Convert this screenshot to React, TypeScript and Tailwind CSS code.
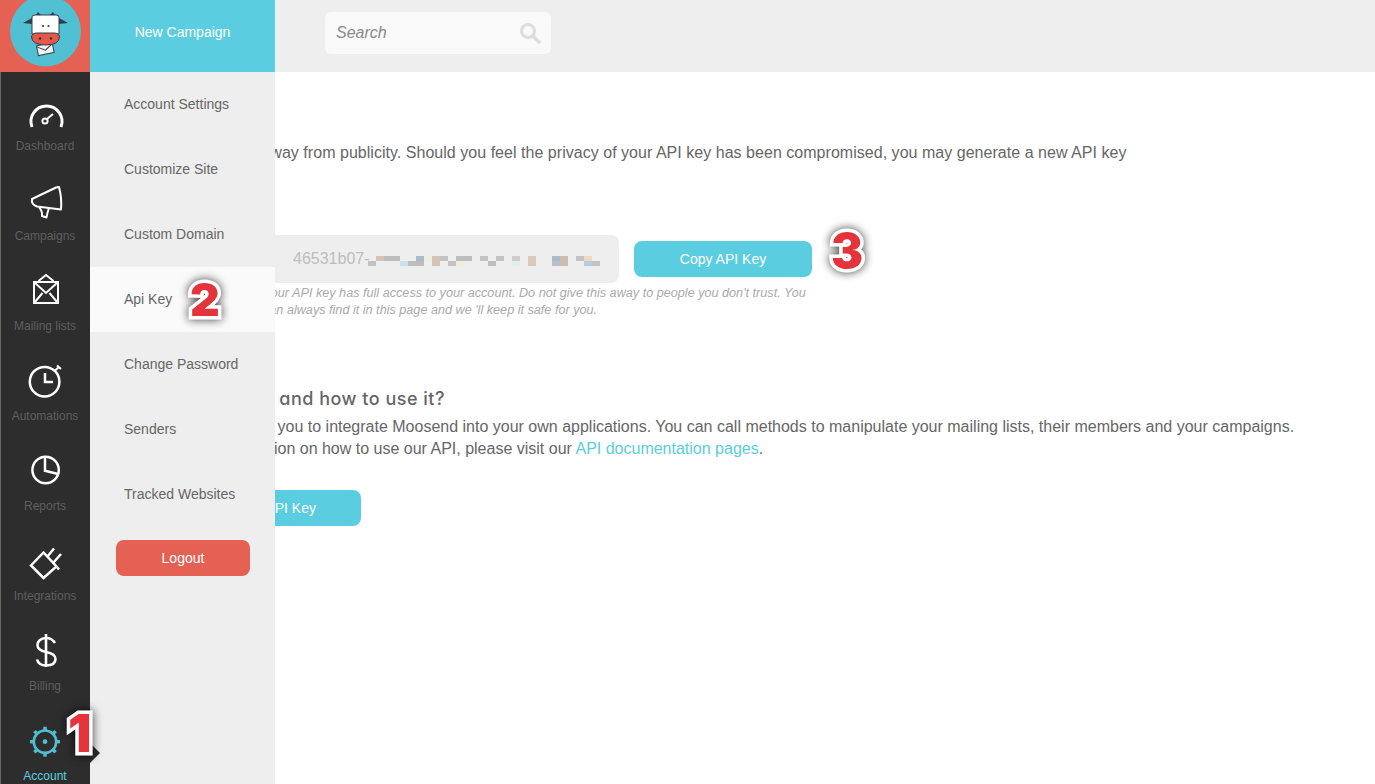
const SANS = "font-['Liberation_Sans',Arial,sans-serif]";

const strokeProps = { fill: "none", stroke: "white", strokeWidth: 2.5 };

function Icon({ children }: { children: React.ReactNode }) {
  return (
    <svg width="90" height="65" viewBox="0 0 90 65" className="block shrink-0">
      {children}
    </svg>
  );
}

const gearTeeth = [0, 45, 90, 135, 180, 225, 270, 315].map((a) => {
  const r = (a * Math.PI) / 180;
  return [45 + 11 * Math.cos(r), 39.7 + 11 * Math.sin(r), 45 + 15 * Math.cos(r), 39.7 + 15 * Math.sin(r)];
});

const navItems = [
  {
    label: "Dashboard",
    icon: (
      <g {...strokeProps}>
        <path d="M32 55 A15.5 15.5 0 1 1 61 55" strokeWidth="3" />
        <circle cx="45" cy="49" r="2.6" strokeWidth="2" />
        <path d="M47 47 L53 42" strokeWidth="2" />
      </g>
    ),
  },
  {
    label: "Campaigns",
    icon: (
      <g {...strokeProps} strokeWidth="2" strokeLinejoin="round">
        <path d="M32 37 L56 25.5 L59 25 Q62 36 61 47.5 L37 44.5 Q31 42.5 32 37 Z" />
        <path d="M39 45 Q42.5 49 42 54 L46.5 55.5 Q47.5 50 49 46" />
      </g>
    ),
  },
  {
    label: "Mailing lists",
    icon: (
      <g {...strokeProps} strokeWidth="2">
        <path d="M34 30 H58 V51 H34 Z" />
        <path d="M34 30 L46 41 L58 30" />
        <path d="M38.5 29 L46 23 L53.5 29" />
        <path d="M34.5 50.5 L42.5 41 M57.5 50.5 L49.5 41" />
      </g>
    ),
  },
  {
    label: "Automations",
    icon: (
      <g {...strokeProps}>
        <circle cx="44.6" cy="39.7" r="14.8" />
        <path d="M45 31 V40 H53" />
        <path d="M54.5 29 L59.5 24.5 M57 23.5 L61 27" strokeWidth="2" />
      </g>
    ),
  },
  {
    label: "Reports",
    icon: (
      <g {...strokeProps}>
        <circle cx="45.6" cy="38" r="13.2" />
        <path d="M45 26 L45 38.7 L58 42" />
      </g>
    ),
  },
  {
    label: "Integrations",
    icon: (
      <g {...strokeProps} strokeLinejoin="miter">
        <path d="M31 43.5 L43.5 30.5 L56.5 44.5 L43.5 56 Z" />
        <path d="M47.5 34.5 L54 26.5 M53.5 40.5 L61 32 M56.5 44.5 L59 47.5" />
      </g>
    ),
  },
  {
    label: "Billing",
    icon: (
      <g {...strokeProps} strokeWidth="2.6">
        <path d="M46 22 V55" />
        <path d="M55 31 C53 27.5 50 26 46 26 C40.5 26 37.5 29.5 37.5 33 C37.5 37 41 39 46 40 C52 41.2 55.5 43 55.5 47 C55.5 51 52 53.5 46 53.5 C41 53.5 38 51 37 47.5" />
      </g>
    ),
  },
  {
    label: "Account",
    active: true,
    icon: (
      <g fill="none" stroke="#4dbfd1" strokeWidth="2.6">
        <circle cx="45" cy="39.7" r="11.2" />
        <circle cx="45" cy="39.7" r="2.4" fill="#4dbfd1" stroke="none" />
        {gearTeeth.map((t, i) => (
          <line key={i} x1={t[0]} y1={t[1]} x2={t[2]} y2={t[3]} strokeWidth="3.4" />
        ))}
      </g>
    ),
  },
];

const panelItems = [
  "Account Settings",
  "Customize Site",
  "Custom Domain",
  "Api Key",
  "Change Password",
  "Senders",
  "Tracked Websites",
];

const keyCells: [number, number, string][] = [
  [18, 0, "#d8c4b4"], [26, 0, "#bdbdbd"], [34, 0, "#bdbdbd"], [58, 0, "#a9bacb"], [66, 0, "#efeedd"], [74, 0, "#d6c3b5"],
  [82, 0, "#c2c2c2"], [98, 0, "#bdbdbd"], [106, 0, "#bdbdbd"], [122, 0, "#c2c2c2"], [138, 0, "#c2c2c2"], [154, 0, "#cfcdc8"],
  [170, 0, "#dac9bb"], [194, 0, "#a9bacb"], [202, 0, "#cdbdb0"], [218, 0, "#c2c2c2"], [226, 0, "#f0d9c2"],
  [10, 5, "#c2c2c2"], [42, 5, "#c7e0ea"], [50, 5, "#bdbdbd"], [58, 5, "#bdbdbd"], [74, 5, "#d6c3b5"], [90, 5, "#c2c2c2"],
  [98, 5, "#efeedd"], [130, 5, "#bdbdbd"], [154, 5, "#e2efe9"], [170, 5, "#dac9bb"], [194, 5, "#b8c0c8"], [202, 5, "#cdbdb0"],
  [226, 5, "#b4cbe0"], [234, 5, "#c2c2c2"],
];

function Badge({ children, className }: { children: React.ReactNode; className: string }) {
  return (
    <div
      className={`absolute z-20 font-['Inter',sans-serif] font-black leading-none text-[#e5333b] [-webkit-text-stroke:7px_white] [paint-order:stroke_fill] drop-shadow-[0_0_5px_rgba(0,0,0,0.75)] ${className}`}
    >
      {children}
    </div>
  );
}

export default function App() {
  return (
    <div className={`relative flex h-[784px] w-[1375px] flex-col overflow-hidden bg-white ${SANS}`}>
      <header className="flex h-[72px] shrink-0 bg-[#eeeeee]">
        <div className="w-[90px] shrink-0 bg-[#e46154]">
          <svg width="90" height="72" viewBox="0 0 90 72" className="block">
            <circle cx="45.5" cy="31" r="35.5" fill="#50c0d2" />
            <path d="M32 18 L23 23 L32 24 Z M59 18 L68 23 L59 24 Z" fill="#2f3e4e" />
            <path d="M36 15 L38 12 L41 15 Z M50 15 L53 12 L55 15 Z" fill="#2f3e4e" />
            <g transform="rotate(-12 46 50)">
              <rect x="37.5" y="44" width="16" height="10" fill="#f2f2f2" stroke="#2f3e4e" strokeWidth="1" />
              <path d="M37.5 45 L45.5 50 L53.5 45" fill="none" stroke="#2f3e4e" strokeWidth="1" />
            </g>
            <path d="M32 17 Q32 15 35 15 H56 Q59 15 59 17 V34 H32 Z" fill="white" stroke="#2f3e4e" strokeWidth="1" />
            <path d="M31.5 37 Q32 33 37 33 H54 Q59 33 59.5 37 Q59 45 46 45 Q32 45 31.5 37 Z" fill="#e4574b" stroke="#2f3e4e" strokeWidth="1" />
            <circle cx="43" cy="26" r="1.1" fill="#2f3e4e" />
            <circle cx="48.5" cy="26" r="1.1" fill="#2f3e4e" />
            <circle cx="40" cy="38.5" r="1.2" fill="#3a2a2a" />
            <circle cx="51" cy="38.5" r="1.2" fill="#3a2a2a" />
          </svg>
        </div>
        <button className="h-full w-[185px] shrink-0 bg-[#5bcde0] pb-2 text-center text-sm text-white">New Campaign</button>
        <div className="ml-[50px] mt-3 flex h-[42px] w-[226px] items-center justify-between rounded-md bg-[#f9f9f9] pl-[11px] pr-[10px]">
          <span className="text-base italic text-[#8a8a8a]">Search</span>
          <svg width="22" height="22" viewBox="0 0 22 22" fill="none" stroke="#dedede">
            <circle cx="9" cy="9" r="6.5" strokeWidth="3" />
            <path d="M14 14 L20 20" strokeWidth="3.5" strokeLinecap="round" />
          </svg>
        </div>
      </header>

      <div className="flex min-h-0 flex-1">
        <nav className="h-[712px] w-[90px] shrink-0 overflow-hidden border-l border-[#6a6a6a] bg-[#2d2d2d]">
          <div className="-ml-px">
            {navItems.map((item) => (
              <div key={item.label} className="h-[90px]">
                <Icon>{item.icon}</Icon>
                <div className={`mt-px h-4 text-center text-xs leading-4 ${item.active ? "text-[#5bcde0]" : "text-[#5f5f5f]"}`}>
                  {item.label}
                </div>
              </div>
            ))}
          </div>
        </nav>

        <aside className="flex w-[185px] shrink-0 flex-col bg-[#eeeeee]">
          {panelItems.map((label) => (
            <div
              key={label}
              className={`flex h-[65px] items-center pb-[2px] pl-[34px] text-sm text-[#666666] ${label === "Api Key" ? "bg-[#fafafa]" : ""}`}
            >
              {label}
            </div>
          ))}
          <button className="ml-[26px] mt-[13px] h-9 w-[134px] rounded-lg bg-[#e46154] text-sm text-white">Logout</button>
        </aside>

        <main className="min-w-0 flex-1 overflow-hidden text-base leading-[22px] text-[#666666]">
          <p className="mt-[70px] -ml-[322px] whitespace-nowrap tracking-[0.03px]">
            Your API key must be kept private and well away from publicity. Should you feel the privacy of your API key has been compromised, you may generate a new API key
          </p>

          <div className="mt-[71px] -ml-[40px] flex items-center">
            <div className="flex h-12 w-[384px] items-center rounded-lg bg-[#eeeeee] pl-[58px] text-base text-[#bdbdbd]">
              <span>46531b07-</span>
              <svg width="242" height="10" viewBox="0 0 242 10" className="-ml-[2px] mt-[4px] shrink-0">
                {keyCells.map(([x, y, c], i) => (
                  <rect key={i} x={x - 10} y={y} width="8" height="5" fill={c} />
                ))}
              </svg>
            </div>
            <button className="ml-[15px] h-9 w-[178px] rounded-lg bg-[#5bcde0] text-sm text-white">Copy API Key</button>
          </div>

          <p className="mt-[2px] -ml-[12px] w-[570px] text-[12.65px] italic leading-[17px] text-[#aaaaaa]">
            Your API key has full access to your account. Do not give this away to people you don't trust. You
            <br />
            can always find it in this page and we 'll keep it safe for you.
          </p>

          <h2 className="mt-[67px] -ml-[173px] whitespace-nowrap font-['Inter',sans-serif] text-lg font-medium leading-[26px] tracking-[0.5px] text-[#666666] [font-feature-settings:'cv11']">
            What is an API Key and how to use it?
          </h2>
          <p className="mt-[4px] -ml-[178px] whitespace-nowrap">
            The Moosend API allows you to integrate Moosend into your own applications. You can call methods to manipulate your mailing lists, their members and your campaigns.
          </p>
          <p className="-ml-[138px] whitespace-nowrap">
            For further information on how to use our API, please visit our <a className="text-[#5bcde0]">API documentation pages</a>.
          </p>

          <button className="mt-[30px] -ml-[174px] h-9 w-[260px] whitespace-nowrap rounded-lg bg-[#5bcde0] pr-[45px] text-right text-sm text-white">Generate API Key</button>
        </main>
      </div>

      <div className="absolute left-[90px] top-[743px] z-10 h-0 w-0 border-y-[10px] border-l-[10px] border-y-transparent border-l-[#2d2d2d]" />
      <Badge className="left-[68px] top-[708px] text-[52px]">1</Badge>
      <Badge className="left-[190px] top-[276px] text-[46px]">2</Badge>
      <Badge className="left-[831px] top-[227px] text-[48px]">3</Badge>
    </div>
  );
}
